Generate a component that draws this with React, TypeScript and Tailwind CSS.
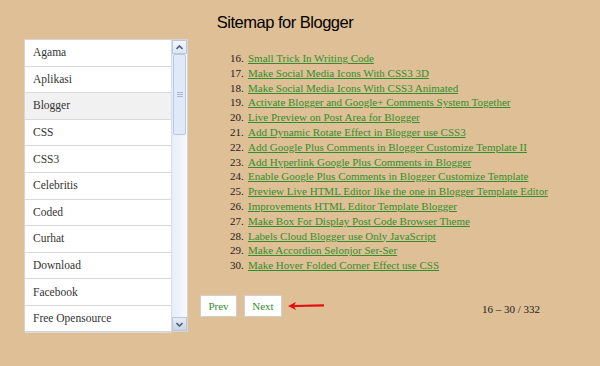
import React from 'react';

const labels = [
  'Agama',
  'Aplikasi',
  'Blogger',
  'CSS',
  'CSS3',
  'Celebritis',
  'Coded',
  'Curhat',
  'Download',
  'Facebook',
  'Free Opensource',
];

const posts = [
  'Small Trick In Writing Code',
  'Make Social Media Icons With CSS3 3D',
  'Make Social Media Icons With CSS3 Animated',
  'Activate Blogger and Google+ Comments System Together',
  'Live Preview on Post Area for Blogger',
  'Add Dynamic Rotate Effect in Blogger use CSS3',
  'Add Google Plus Comments in Blogger Customize Template II',
  'Add Hyperlink Google Plus Comments in Blogger',
  'Enable Google Plus Comments in Blogger Customize Template',
  'Preview Live HTML Editor like the one in Blogger Template Editor',
  'Improvements HTML Editor Template Blogger',
  'Make Box For Display Post Code Browser Theme',
  'Labels Cloud Blogger use Only JavaScript',
  'Make Accordion Selonjor Ser-Ser',
  'Make Hover Folded Corner Effect use CSS',
];

function Scrollbar() {
  return (
    <div className="flex w-[16px] flex-col border-l border-[#d6dde8] bg-gradient-to-r from-[#e6eefa] to-[#f6f9fe]">
      <div className="flex h-[14px] items-center justify-center border border-[#b9c8df] bg-gradient-to-b from-[#f4f7fc] to-[#dde6f3]">
        <svg width="7" height="5" viewBox="0 0 7 5">
          <path d="M0.5 4 L3.5 1 L6.5 4" fill="none" stroke="#4d6185" strokeWidth="1.6" />
        </svg>
      </div>
      <div className="mx-[1px] flex h-[81px] items-center justify-center rounded-[2px] border border-[#b9c8df] bg-[repeating-linear-gradient(90deg,#d8e3f4_0px,#e9f0fb_1px,#d8e3f4_2px)]">
        <div className="flex flex-col gap-[1px]">
          <div className="h-[1px] w-[6px] bg-[#a9b7cc]" />
          <div className="h-[1px] w-[6px] bg-[#a9b7cc]" />
          <div className="h-[1px] w-[6px] bg-[#a9b7cc]" />
        </div>
      </div>
      <div className="flex-1" />
      <div className="flex h-[14px] items-center justify-center border border-[#b9c8df] bg-gradient-to-b from-[#e8edf5] to-[#c9d3e2]">
        <svg width="7" height="5" viewBox="0 0 7 5">
          <path d="M0.5 1 L3.5 4 L6.5 1" fill="none" stroke="#4d6185" strokeWidth="1.6" />
        </svg>
      </div>
    </div>
  );
}

export default function App() {
  return (
    <div className="h-[366px] w-[600px] overflow-hidden bg-[#dfbf95]">
      {/* Title */}
      <h1 className="pr-[30px] pt-[11px] text-center font-['Liberation_Sans',sans-serif] text-[16.5px] leading-[22px] tracking-[-0.5px] text-black">
        Sitemap for Blogger
      </h1>

      <div className="mt-[6px] flex pl-[24px]">
        {/* Labels box */}
        <div className="flex h-[293px] w-[164px] border border-[#d5d5d5] bg-white">
          <ul className="flex-1 font-['Liberation_Serif',serif] text-[11.5px] text-[#333]">
            {labels.map(l => (
              <li
                key={l}
                className={`flex h-[26.6px] items-center border-b border-[#dadada] pl-[8px] ${
                  l === 'Blogger' ? 'bg-[#f1f1f1]' : ''
                }`}
              >
                {l}
              </li>
            ))}
          </ul>
          <Scrollbar />
        </div>

        {/* Posts */}
        <div className="ml-[12px] flex flex-1 flex-col">
          <ol className="ml-[30px] mt-[12px] font-['Liberation_Serif',serif] text-[11px] leading-[14.8px]">
            {posts.map((p, i) => (
              <li key={p} className="flex">
                <span className="w-[18px] text-[#222]">{i + 16}.</span>
                <a href="#" className="text-[#2f8f2f] underline decoration-[#2f8f2f] underline-offset-[1px]">
                  {p}
                </a>
              </li>
            ))}
          </ol>

          <div className="mt-[22px] flex items-center pr-[60px] font-['Liberation_Serif',serif]">
            <button className="h-[22px] w-[37px] border border-[#d0d0d0] bg-white text-[11px] text-[#2f8f2f]">
              Prev
            </button>
            <button className="ml-[7px] h-[22px] w-[38px] border border-[#d0d0d0] bg-white text-[11px] text-[#2f8f2f]">
              Next
            </button>
            <svg className="ml-[5px]" width="38" height="10" viewBox="0 0 38 10">
              <path d="M1 5 L9 1 L7.5 4 L37 3.3 L37 5.6 L7.5 6 L9 9 Z" fill="#e01010" />
            </svg>
            <span className="ml-auto mt-[6px] text-[11px] text-[#222]">16 – 30 / 332</span>
          </div>
        </div>
      </div>
    </div>
  );
}
